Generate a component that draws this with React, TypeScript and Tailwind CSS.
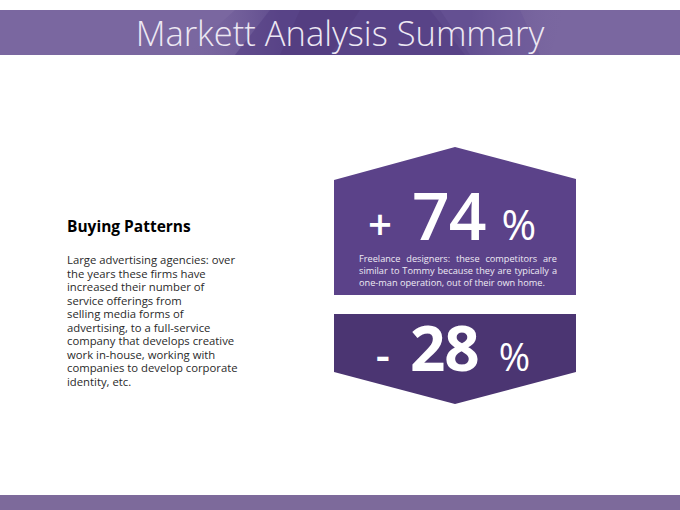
import React from "react";

const font = { fontFamily: '"Open Sans", "Noto Sans", sans-serif' };

export default function App() {
  return (
    <div className="w-[680px] h-[510px] bg-white flex flex-col overflow-hidden" style={font}>
      <div className="h-[10px] shrink-0" />
      <div className="relative h-[45px] shrink-0 bg-[#7a67a0] flex items-center justify-center overflow-hidden">
        <svg className="absolute inset-0" width="680" height="45" viewBox="0 0 680 45">
          <defs>
            <linearGradient id="hg" x1="0" y1="0" x2="1" y2="0">
              <stop offset="0" stopColor="#7a67a0" stopOpacity="0" />
              <stop offset="0.25" stopColor="#5e4a8c" stopOpacity="1" />
              <stop offset="0.75" stopColor="#5e4a8c" stopOpacity="1" />
              <stop offset="1" stopColor="#7a67a0" stopOpacity="0" />
            </linearGradient>
          </defs>
          <polygon points="185,45 235,0 565,0 550,45" fill="url(#hg)" />
          <polygon points="235,45 270,0 430,0 465,45" fill="#553f83" opacity="0.6" />
          <polygon points="300,0 360,0 330,45 280,45" fill="#4f3a7c" opacity="0.5" />
          <polygon points="440,0 520,0 540,45 470,45" fill="#6a5697" opacity="0.5" />
        </svg>
        <div className="relative text-[34.5px] font-light text-[#ede8f3] leading-[45px] whitespace-nowrap">
          Markett Analysis Summary
        </div>
      </div>
      <div className="flex-1 flex items-start">
        <div className="ml-[67px] mt-[161px] w-[190px]">
          <div className="text-[15.5px] font-bold text-black leading-[20px]">Buying Patterns</div>
          <div className="mt-[17px] text-[11.3px] leading-[13.5px] text-[#2a2a2a]">
            Large advertising agencies: over<br />
            the years these firms have<br />
            increased their number of<br />
            service offerings from<br />
            selling media forms of<br />
            advertising, to a full-service<br />
            company that develops creative<br />
            work in-house, working with<br />
            companies to develop corporate<br />
            identity, etc.
          </div>
        </div>
        <div className="ml-[77px] mt-[92px] w-[242px] flex flex-col">
          <div className="h-[148px] bg-[#5b4289] [clip-path:polygon(0_33px,50%_0,100%_32px,100%_100%,0_100%)] flex flex-col items-center">
            <div className="mt-[34px] mr-[6px] flex items-baseline text-white leading-none">
              <span className="text-[42px] font-semibold leading-none">+</span>
              <span className="ml-[20px] text-[66px] font-semibold leading-none tracking-[-1px]">74</span>
              <span className="ml-[16px] text-[42px] font-medium leading-none">%</span>
            </div>
            <div className="mt-[6px] ml-[6px] w-[198px] text-[9.2px] leading-[12px] text-[#eeeaf4]">
              <div className="[text-align:justify] [text-align-last:justify]">Freelance designers: these competitors are</div>
              <div className="[text-align:justify] [text-align-last:justify]">similar to Tommy because they are typically a</div>
              <div>one-man operation, out of their own home.</div>
            </div>
          </div>
          <div className="mt-[19px] h-[90px] bg-[#4b3572] [clip-path:polygon(0_0,100%_0,100%_58px,50%_100%,0_58px)] flex justify-center">
            <div className="mt-[2px] mr-[4px] flex items-baseline text-white leading-none">
              <span className="text-[44px] font-semibold leading-none">-</span>
              <span className="ml-[20px] text-[62px] font-bold leading-none tracking-[-1px]">28</span>
              <span className="ml-[20px] text-[38px] font-medium leading-none">%</span>
            </div>
          </div>
        </div>
      </div>
      <div className="h-[15px] shrink-0 bg-[#7d6a9b]" />
    </div>
  );
}
